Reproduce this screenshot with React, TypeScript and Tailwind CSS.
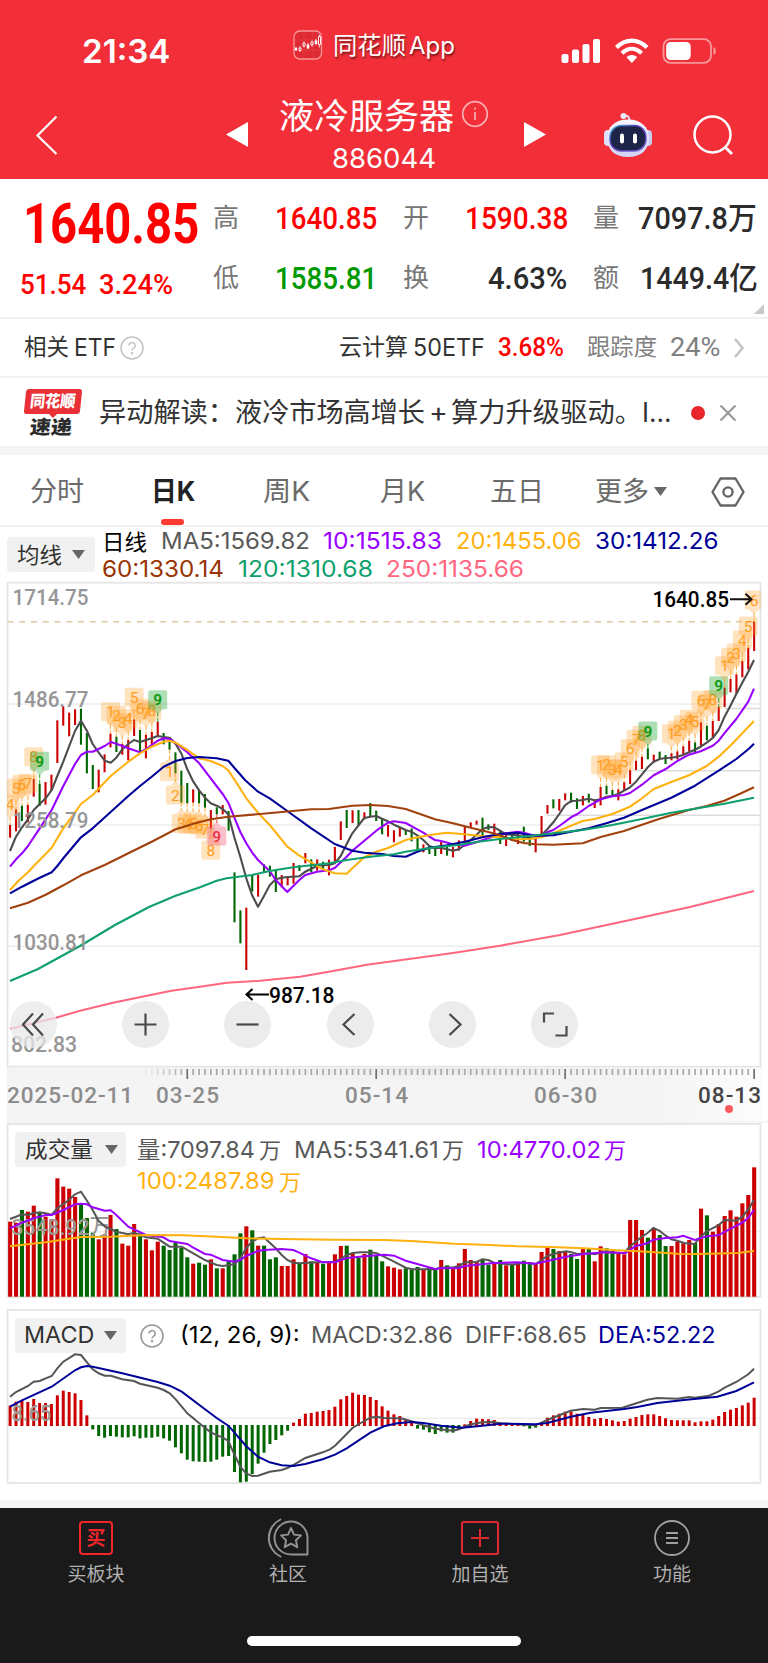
import React, { useLayoutEffect, useRef, useState } from "react";

/** Text that is stretched or squeezed horizontally to fill the width set by its class. */
function Fit({ className = "", children }: { className?: string; children: React.ReactNode }) {
  const outer = useRef<HTMLSpanElement>(null);
  const inner = useRef<HTMLSpanElement>(null);
  const [scale, setScale] = useState(1);
  useLayoutEffect(() => {
    const measure = () => {
      if (outer.current && inner.current && inner.current.offsetWidth > 0) {
        setScale(outer.current.clientWidth / inner.current.offsetWidth);
      }
    };
    measure();
    document.fonts?.ready.then(measure);
  }, []);
  return (
    <span ref={outer} className={`inline-block shrink-0 whitespace-nowrap leading-none ${className}`}>
      <span ref={inner} className="inline-block origin-left" style={{ transform: `scaleX(${scale})` }}>
        {children}
      </span>
    </span>
  );
}

const RED = "#cc0000";
const GREEN = "#006600";
const X0 = 10.1;
const STEP = 5.905;
const bx = (i: number) => X0 + STEP * i;

type Pt = [number, number];
/** Converts points kept in thirds of a pixel, relative to an origin, to page units. */
const seg = (ox: number, oy: number, s: string): Pt[] =>
  s.split(" ").map((p) => {
    const [x, y] = p.split(",").map(Number);
    return [ox + x / 3, oy + y / 3] as Pt;
  });
const poly = (...parts: Pt[][]) =>
  parts
    .flat()
    .map(([x, y]) => `${x.toFixed(1)},${y.toFixed(1)}`)
    .join(" ");

const bars = (s: string, oy: number) =>
  s.split(" ").map((t) => {
    const [a, b] = t.slice(1).split("-").map(Number);
    return { up: t[0] === "R", a: oy + a / 3, b: oy + (b || 0) / 3 };
  });

const candles = [
  ...bars(
    "R735-773 R688-754 G677-723 R675-727 R597-650 G611-678 R606-674 R584-633 R421-549 R379-437 R398-469 R388-435 G386-494 G459-580 G555-627 R569-637 R523-577 R461-502 G470-516 R492-524 R480-541 R418-468 G450-516 R464-535 R456-494 R425-468 G459-493 G484-509 G517-580 G572-668 G609-670 R628-668 G630-670 G642-683 R690-746 G682-703 R675-703 G693-752",
    580,
  ),
  ...bars(
    "G277-427 G391-490 R383-570 G285-335 R284-350 G253-277 G257-290 G273-336 R285-322 R293-316 R249-311 G255-273 R219-250 G238-277 R238-272 G245-270 R239-286 R201-245 R124-180 G90-144 R91-129 G90-137 R97-118 G69-110 G92-123 G115-163 R135-170 R151-187 R144-170 G150-165 G145-184 G173-214 R193-217 G198-222 G200-228 R183-222 G196-227 R201-232 R181-212 R140-188 R127-144 R122-134 G113-170 G133-150 R131-160 G150-192",
    780,
  ),
  ...bars(
    "R757-798 G760-782 R755-792 G740-785 G762-798 R765-817 R708-764 R675-701 G658-685 R657-692 R640-661 G638-668 G655-687 R648-676 G641-668 R660-684 R621-676 G617-643 G630-648 R628-661 R607-633 R570-612 R542-570 R530-567 G505-538 R524-546 G515-536 G525-552 R520-541 R514-538 R499-522 R482-514 G487-517 R427-497 G437-481 R423-475 R380-423 R323-381 R297-337 R283-340 R243-292 R203-268 R125-213",
    580,
  ),
];

const volumes = bars(
  "R305 R308 G270 R275 R257 G278 R290 R298 R175 R200 R206 R231 G250 G294 G338 R358 R343 R285 G327 R371 R377 R312 G340 R358 R391 R365 G377 G390 G368 G384 G412 R431 G428 G434 R418 G445 R445 G424 G403 G340 R319 G331 R377 G377 G418 G412 R438 R438 R418 G428 R402 G424 R426 G431 R424 R403 R378 G377 R400 G413 R402 G389 G407 G424 R439 R443 R448 G445 G448 G441 R450 G443 G447 R420 G436 R443 R430 R387 R420 R424 G418 G434 R430 G420 R436 G431 R432 G422 G426 R430 R396 R382 G387 R393 R394 G402 G417 R384 G384 R424 R379 G385 G392 R396 R403 R300 R300 R330 G353 R325 G345 G378 R378 R365 R370 R360 G369 R266 G286 R335 R312 R288 R271 R290 R250 R225 R142",
  1120,
);

const macd =
  "317 305 303 306 297 309 309 312 286 272 276 280 300 346 388 408 413 408 410 412 412 409 415 413 413 410 415 422 442 460 479 484 485 486 485 479 470 468 516 547 545 522 491 458 432 420 406 392 368 357 341 339 335 333 330 320 298 288 278 284 285 291 300 319 332 343 348 360 368 386 389 397 402 394 398 398 387 373 363 356 357 358 360 367 369 371 373 379 386 383 371 353 346 341 335 335 341 343 351 357 354 357 361 365 363 356 351 345 343 343 348 355 360 361 361 361 367 364 364 359 348 336 329 324 316 308 293"
    .split(" ")
    .map((n) => 1300 + Number(n) / 3);

const ma5 = poly(
  seg(0, 580, "30,813 48,770 66,742 84,718 101,690 119,672 137,655 155,630 172,588 190,545 207,500 225,453 243,422 261,453 278,492 296,518 314,542 332,548 349,533 367,508 385,492 402,480 420,486 438,480 455,475 473,468 491,471 509,473 527,492 545,523 562,568 580,605 598,632 615,653 632,670 650,677 668,687 685,703"),
  seg(200, 780, "103,172 121,230 139,295 156,345 174,380 192,348 209,316 227,298 245,293 262,291 280,290 298,289 316,275 334,266 351,258 369,256 387,255 404,250 422,228 440,192 457,160 475,137 493,114 511,110 529,108 546,116 564,124 582,134 599,142 617,150 634,155 652,166 670,180 688,198 705,205 723,203 741,208 759,212 776,208 794,195 812,180 829,165 847,148 865,141 883,142"),
  seg(500, 580, "0,752 18,763 53,766 71,772 89,775 107,775 124,766 142,748 160,727 178,702 195,676 213,663 231,662 248,660 266,656 284,661 302,658 319,650 337,648 355,642 372,632 390,622 408,605 426,583 443,562 461,545 479,537 496,534 514,533 532,530 549,525 567,517 585,509 602,500 620,488 638,474 656,450 673,412 691,378 709,342 727,308 745,275 762,240"),
);
const ma10 = poly(
  seg(0, 580, "30,860 48,838 66,820 84,798 119,745 155,690 190,618 225,552 243,525 261,515 278,515 314,498 332,486 349,491 385,505 420,517 438,508 473,482 491,475 509,477 527,489 562,517 598,550 632,595 668,642 685,668 703,712"),
  seg(200, 780, "121,156 139,190 156,217 174,240 209,273 227,300 262,336 280,318 298,300 316,285 351,275 387,271 404,264 422,247 440,230 457,212 493,182 529,152 564,128 582,124 617,129 652,148 670,158 688,170 705,180 723,183 759,193 794,197 829,187 865,175"),
  seg(500, 580, "0,763 53,755 71,758 107,768 124,767 142,757 160,750 178,738 213,712 231,703 266,678 302,658 337,649 372,645 390,639 426,614 461,586 496,568 532,543 567,524 602,514 638,497 656,482 673,460 709,417 745,365 762,326"),
);
const ma20 = poly(
  seg(0, 580, "30,930 58,900 84,877 101,858 119,840 155,803 190,745 243,672 278,645 332,588 385,545 420,520 455,500 491,485 509,482 527,488 562,510 598,535 632,543 668,558 685,571 703,598"),
  seg(200, 780, "139,55 174,98 209,135 262,200 298,227 334,247 369,268 404,280 440,281 457,265 493,232 529,215 564,204 582,196 617,180 652,172 705,163 741,158 794,163 847,168"),
  seg(500, 580, "0,772 36,778 89,777 124,772 160,760 213,737 248,723 284,717 337,702 390,680 426,655 461,627 514,606 567,586 620,558 656,530 691,497 727,460 762,423"),
);
const ma30 = poly(
  seg(0, 580, "30,940 66,920 119,893 155,877 172,858 190,835 243,772 278,745 332,696 385,648 420,618 455,590 491,560 527,543 562,534 598,531 650,535 685,542 703,563"),
  seg(200, 780, "135,0 174,35 209,55 262,93 334,145 404,192 457,212 493,218 546,222 582,228 617,230 652,215 688,203 741,196 794,185 847,172"),
  seg(500, 580, "0,762 53,758 89,766 124,767 160,766 213,755 266,745 319,730 372,713 426,690 514,653 585,617 656,572 709,537 745,508 762,491"),
);
const ma60 = poly(
  seg(0, 580, "30,985 84,968 137,944 190,916 243,886 314,855 385,820 455,785 527,748 580,731 632,718 685,710"),
  seg(200, 780, "180,102 245,96 334,88 387,87 457,77 511,75 564,78 617,87 705,118 759,130 812,143 865,156"),
  seg(500, 580, "0,766 36,780 71,789 107,793 160,794 248,790 302,771 372,753 426,734 479,716 567,690 620,678 673,662 727,638 762,622"),
);
const ma120 = poly(
  [[10, 981], [38, 969], [80, 946], [115, 925], [149, 907], [175, 896]],
  seg(200, 780, "0,322 50,302 80,295 156,285 209,273 280,262 387,250 440,240 511,230 582,223 617,215 705,202 776,195 829,186"),
  seg(500, 580, "0,777 89,768 160,760 248,750 337,735 426,717 514,698 602,683 673,671 762,653"),
);
const ma250 = poly(
  [[10, 1028.7], [56, 1017.7], [80, 1010.7], [113, 1002.7], [147, 995.7], [171.5, 990.7], [200, 986.7], [227, 982.7], [260, 980.7], [300, 976.7], [333, 971], [367, 964.7], [400, 960.3], [453, 953], [500, 945.7], [560, 935], [630, 920], [690, 907], [754, 891]],
);

const vol5 = poly(
  seg(0, 1120, "30,297 48,290 66,283 84,285 101,279 119,277 137,280 155,284 172,265 207,240 225,223 243,215 261,242 278,270 296,303 314,319 332,327 349,335 385,343 402,338 438,352 473,356 509,380 545,380 580,400 615,420 650,435 668,438 703,433 721,415 738,385 756,365 774,355 792,352 809,368 827,385 845,405 862,420 880,428 900,430 950,427 1005,425 1022,417 1040,405 1058,399 1080,397 1111,397 1130,400"),
  seg(384, 1120, "0,410 30,425 65,443 85,448 153,448 170,443 210,442 225,438 242,427 278,426 295,418 313,420 330,428 384,434 420,428 455,432 473,420 490,408 508,402 545,394 562,397 580,402 615,400 632,403 660,395 720,400 735,382 755,365 773,350 790,340 808,324 826,332 845,347 862,358 880,362 900,369 932,372 950,350 968,334 985,325 1003,316 1022,300 1057,302 1075,290 1093,268 1110,240"),
);
const vol10 = poly(
  seg(0, 1120, "30,325 66,308 101,295 137,285 155,285 190,270 225,253 243,251 261,253 278,262 314,272 332,271 349,285 385,320 402,328 438,345 490,352 509,363 562,372 580,383 615,402 632,404 668,420 703,425 721,420 738,408 774,393 792,390 845,387 880,390 898,398 933,415 968,427 1005,427 1040,414 1111,407"),
  seg(384, 1120, "0,404 30,407 65,422 100,432 153,447 170,445 225,444 242,438 278,434 330,429 400,427 455,431 490,423 545,410 600,402 660,397 725,399 755,378 790,370 808,359 845,354 880,352 898,347 932,360 968,349 1003,346 1040,326 1075,308 1093,293 1110,270"),
);
const vol100 = poly(
  seg(0, 1120, "30,379 137,367 243,351 332,350 438,345 550,346 650,350 738,355 850,357 1000,359"),
  seg(384, 1120, "0,360 80,363 210,371 300,374 400,379 500,381 600,385 700,391 790,395 880,401 940,402 1060,399 1110,393"),
);
const diff = poly(
  seg(0, 1300, "30,290 48,276 84,258 101,245 119,243 137,235 155,228 172,205 190,185 225,163 243,165 261,187 278,208 296,220 314,227 332,227 367,238 402,243 420,251 473,263 491,270 509,280 527,298 562,340 598,370 632,397 668,413 685,423 703,463 721,500 738,520 756,528 774,527 809,515 845,510 862,504 880,495 916,474 968,457 990,448 1005,437 1022,420 1058,383 1093,363 1111,353 1130,350"),
  seg(384, 1300, "0,354 50,355 83,364 118,376 153,386 207,392 225,388 242,380 260,373 295,367 330,366 348,370 455,376 490,360 560,332 597,327 632,329 650,324 715,323 750,312 790,299 820,294 880,296 915,291 932,293 975,287 1003,275 1022,263 1057,246 1093,223 1110,206"),
);
const dea = poly(
  seg(0, 1300, "30,320 66,301 155,260 225,211 243,202 261,198 278,200 367,220 473,246 509,257 545,275 615,328 650,354 685,377 703,397 738,438 774,470 809,487 845,496 880,498 916,492 968,478 1005,464 1040,445 1111,398"),
  seg(384, 1300, "0,379 40,370 83,366 118,369 172,377 235,383 295,377 350,371 455,373 490,369 560,350 620,338 720,327 760,321 820,309 900,300 1000,290 1057,273 1110,247"),
);

/** Sequence markers: bar index, digit, box centre in thirds of a pixel below 580, and side of the candle. */
const marks: [number, number, number, "t" | "b"][] = [
  [0, 4, 672, "t"], [1, 5, 624, "t"], [2, 6, 613, "t"], [3, 7, 610, "t"], [4, 8, 530, "t"], [5, 9, 544, "t"],
  [17, 1, 395, "t"], [18, 2, 406, "t"], [19, 3, 428, "t"], [20, 4, 416, "t"], [21, 5, 352, "t"], [22, 6, 384, "t"], [23, 7, 399, "t"], [24, 8, 391, "t"], [25, 9, 359, "t"],
  [27, 1, 575, "b"], [28, 2, 645, "b"], [29, 3, 730, "b"], [30, 4, 733, "b"], [31, 5, 731, "b"], [32, 6, 735, "b"], [33, 7, 748, "b"], [34, 8, 811, "b"], [35, 9, 768, "b"],
  [99, 0, 555, "t"], [100, 1, 555, "t"], [101, 2, 554, "t"], [102, 3, 568, "t"], [103, 4, 567, "t"], [104, 5, 545, "t"], [105, 6, 506, "t"], [106, 7, 478, "t"], [107, 8, 466, "t"], [108, 9, 453, "t"],
  [112, 1, 461, "t"], [113, 2, 450, "t"], [114, 3, 434, "t"], [115, 4, 418, "t"], [116, 5, 424, "t"], [117, 6, 361, "t"], [118, 7, 372, "t"], [119, 8, 359, "t"], [120, 9, 317, "t"],
  [121, 1, 257, "t"], [122, 2, 232, "t"], [123, 3, 219, "t"], [124, 4, 180, "t"], [125, 5, 138, "t"], [126, 6, 60, "t"],
];

const sans = "[font-family:Inter,'Noto_Sans_CJK_SC',sans-serif]";
const num = "[font-family:Roboto,'Noto_Sans_CJK_SC',sans-serif]";

function Mark({ m }: { m: [number, number, number, "t" | "b"] }) {
  const [i, d, z, side] = m;
  if (d === 0) return null;
  const x = bx(i);
  const y = 580 + z / 3;
  const nine = d === 9;
  const fill = nine ? (side === "t" ? "#1fa32e" : "#f0506a") : "#ffa028";
  const ink = nine ? (side === "t" ? "#0a9a14" : "#f03545") : "#ff9d1c";
  const c = candles[i];
  return (
    <g>
      <line x1={x} x2={x} y1={side === "t" ? y + 13 : c.b} y2={side === "t" ? c.a : y - 13} stroke={ink} strokeWidth="1.2" strokeDasharray="4 1.5" opacity=".75" />
      <rect x={x - 9.5} y={y - 9.5} width="19" height="19" rx="2" fill={fill} opacity={nine ? 0.36 : 0.3} />
      <path d={side === "t" ? `M${x - 5} ${y + 9.5}h10l-5 5z` : `M${x - 5} ${y - 9.5}h10l-5-5z`} fill={fill} opacity=".3" />
      <text x={x} y={y + 5.8} textAnchor="middle" fontSize="15.5" fontWeight={nine ? 600 : 400} fill={ink}>{d}</text>
    </g>
  );
}

function PriceChart() {
  const line = (points: string, stroke: string) => (
    <polyline points={points} fill="none" stroke={stroke} strokeWidth="2.1" strokeLinejoin="round" />
  );
  const axis = (label: string, y: number, w = 76, x = 12.5) => (
    <text x={x} y={y} textLength={w} lengthAdjust="spacingAndGlyphs" fontSize="22.5" fontWeight="500" fill="#969696">{label}</text>
  );
  return (
    <svg viewBox="0 581 768 487" className={`block h-[487px] w-[768px] ${num}`}>
      <defs>
        <clipPath id="plot"><rect x="7" y="582" width="754" height="485" /></clipPath>
      </defs>
      <path d="M8 704H760M8 825H760M8 946.3H760" stroke="#ededed" strokeWidth="1.5" />
      <path d="M724 708.5H760M634 770.7H760M547 815.2H760" stroke="#dcdcdc" strokeWidth="1.5" />
      <rect x="7.5" y="582.7" width="753" height="484" fill="none" stroke="#e6e6e6" strokeWidth="1.9" />
      <path d="M7.5 621.8H754" stroke="#dfc9a4" strokeWidth="1.6" strokeDasharray="6 5.75" />
      <g clipPath="url(#plot)">
        {candles.map((c, i) => (
          <line key={i} x1={bx(i)} x2={bx(i)} y1={c.a} y2={c.b} stroke={c.up ? RED : GREEN} strokeWidth="2.1" />
        ))}
        {marks.map((m) => <Mark key={m[0]} m={m} />)}
        {line(ma5, "#4d4d4d")}
        {line(ma10, "#9900ff")}
        {line(ma20, "#ffb10f")}
        {line(ma30, "#000099")}
        {line(ma60, "#a0410d")}
        {line(ma120, "#0f9f6e")}
        {line(ma250, "#ff6680")}
      </g>
      {axis("1714.75", 605)}
      {axis("1486.77", 707)}
      {axis("1258.79", 828)}
      {axis("1030.81", 950)}
      {axis("802.83", 1051.5, 66, 11)}
      <text x="652.5" y="607" textLength="76.5" lengthAdjust="spacingAndGlyphs" fontSize="22.5" fontWeight="500" fill="#000">1640.85</text>
      <path d="M730 599.3H751M745.5 593.8L751.5 599.3L745.5 604.8" stroke="#111" strokeWidth="2" fill="none" />
      <text x="269" y="1002.5" textLength="65.5" lengthAdjust="spacingAndGlyphs" fontSize="22.5" fontWeight="500" fill="#000">987.18</text>
      <path d="M269 994.5H247M252.5 989L246.5 994.5L252.5 1000" stroke="#000" strokeWidth="2" fill="none" />
    </svg>
  );
}

function Timeline() {
  const ticks = Array.from({ length: 104 }, (_, k) => k + 23);
  return (
    <svg viewBox="0 0 768 53" className={`block h-[53px] w-[768px] ${num}`}>
      <defs>
        <linearGradient id="tl" x1="0" y1="0" x2="1" y2="0">
          <stop offset="0" stopColor="#f4f4f4" /><stop offset=".85" stopColor="#f4f4f4" /><stop offset="1" stopColor="#fcfcfc" />
        </linearGradient>
        <radialGradient id="glow" cx=".5" cy="0" r=".5">
          <stop offset="0" stopColor="#e8e8e8" /><stop offset="1" stopColor="#f4f4f4" stopOpacity="0" />
        </radialGradient>
      </defs>
      <rect x="7" width="755" height="53" fill="url(#tl)" />
      <rect x="130" width="600" height="40" fill="url(#glow)" />
      {ticks.map((i) => {
        const major = (i - 30) % 32 === 0;
        return (
          <line key={i} x1={bx(i)} x2={bx(i)} y1="1" y2={major ? 11 : 7} stroke={major ? "#707070" : "#a8a8a8"} strokeWidth="1.7" opacity={Math.min(1, (i - 22) / 8)} />
        );
      })}
      <g fontSize="22.5" fontWeight="500" fill="#8c8c8c">
        <text x="7" y="34.8" textLength="126" lengthAdjust="spacing">2025-02-11</text>
        <text x="156" y="34.8" textLength="63" lengthAdjust="spacing">03-25</text>
        <text x="345" y="34.8" textLength="63" lengthAdjust="spacing">05-14</text>
        <text x="534" y="34.8" textLength="63" lengthAdjust="spacing">06-30</text>
        <text x="698" y="34.8" textLength="63" lengthAdjust="spacing" fill="#444">08-13</text>
      </g>
      <circle cx="729" cy="41" r="4" fill="#fa5a5f" />
    </svg>
  );
}

function VolumeChart() {
  return (
    <svg viewBox="0 1123 768 175" className={`block h-[175px] w-[768px] ${num}`}>
      <path d="M8 1231.7H760" stroke="#ededed" strokeWidth="1.5" />
      <rect x="7.5" y="1124" width="753" height="173" fill="none" stroke="#e6e6e6" strokeWidth="1.9" />
      {volumes.map((v, i) => (
        <rect key={i} x={bx(i) - 2} y={v.a} width="4.1" height={1296.7 - v.a} fill={v.up ? RED : GREEN} />
      ))}
      <text x="11.5" y="1235" textLength="99" lengthAdjust="spacingAndGlyphs" fontSize="22.5" fontWeight="500" fill="#999">3548.92万</text>
      <polyline points={vol5} fill="none" stroke="#555" strokeWidth="2" />
      <polyline points={vol10} fill="none" stroke="#9900ff" strokeWidth="2" />
      <polyline points={vol100} fill="none" stroke="#ffb10f" strokeWidth="2" />
    </svg>
  );
}

function MacdChart() {
  return (
    <svg viewBox="0 1309 768 175" className={`block h-[175px] w-[768px] ${num}`}>
      <path d="M8 1418.3H760" stroke="#ededed" strokeWidth="1.5" />
      <rect x="7.5" y="1310" width="753" height="173" fill="none" stroke="#e6e6e6" strokeWidth="1.9" />
      {macd.map((y, i) => {
        const up = y < 1425.5;
        return <rect key={i} x={bx(i) - 1.5} y={up ? y : 1425} width="3" height={up ? 1426 - y : y - 1425} fill={up ? RED : GREEN} />;
      })}
      <text x="11.5" y="1421" textLength="40" lengthAdjust="spacingAndGlyphs" fontSize="22.5" fontWeight="500" fill="#999">8.65</text>
      <polyline points={diff} fill="none" stroke="#555" strokeWidth="2" />
      <polyline points={dea} fill="none" stroke="#000099" strokeWidth="2" />
    </svg>
  );
}

function Caret({ className = "" }: { className?: string }) {
  return (
    <svg viewBox="0 0 13 9" className={`h-[9px] w-[13px] shrink-0 ${className}`}>
      <path d="M0 0H13L6.500 9z" fill="#666" />
    </svg>
  );
}

function Help({ className = "", stroke = "#999" }: { className?: string; stroke?: string }) {
  return (
    <svg viewBox="0 0 24 24" className={`size-6 shrink-0 ${className}`} fill="none" stroke={stroke} strokeWidth="1.600">
      <circle cx="12" cy="12" r="11" />
      <path d="M8.900 9.600a3.100 3.100 0 1 1 4.800 2.600c-1.100.7-1.700 1.200-1.700 2.400" />
      <circle cx="12" cy="17.300" r=".5" fill={stroke} />
    </svg>
  );
}

function Stat({ label, children }: { label: string; children: React.ReactNode }) {
  return (
    <div className="flex h-[26px] items-center">
      <span className="-ml-px mr-px w-[26px] shrink-0 text-[26px] leading-none text-[#777]">{label}</span>
      {children}
    </div>
  );
}

function RoundButton({ children, faint }: { children: React.ReactNode; faint?: boolean }) {
  return (
    <div className={`flex size-[47px] items-center justify-center rounded-full ${faint ? "mr-[10px] bg-[#e8e8e8]/75" : "bg-[#ececec]"}`}>
      <svg viewBox="0 0 47 47" className="size-[47px]" fill="none" stroke="#4a4a4a" strokeWidth="2.200">{children}</svg>
    </div>
  );
}

export default function App() {
  return (
    <div className={`flex h-[1663px] w-[768px] flex-col overflow-hidden bg-white ${sans}`}>
      {/* Header */}
      <header className="flex h-[179px] shrink-0 flex-col bg-[#f22f38] text-white">
        <div className="flex h-[90px] items-start">
          <Fit className="ml-[82px] mt-[36px] w-[88px] text-[32px] font-semibold">21:34</Fit>
          <svg viewBox="0 0 30 30" className="ml-[123px] mt-[29.500px] size-[30px] shrink-0" fill="none">
            <rect x="1" y="1" width="27.500" height="28" rx="6" fill="#e02a33" stroke="#f9979b" strokeWidth="1.300" />
            <path d="M11 2v26M20 2v26M2 10H28M2 20H28" stroke="#e8444b" strokeWidth=".6" />
            <path d="M7 16v6M11 11.500v6M15 13v6M19 10.500v6M23 9v6M26.400 4.500v13" stroke="#fff" strokeWidth=".8" />
            <path d="M1.600 17.500h2.600v3H1.600zM13.700 14.500h2.600v4h-2.600zM21.700 10.500h2.600v3.500h-2.600z" fill="#fff" />
            <path d="M6 18h2v2.500H6zM10 13h2v3h-2zM18 12h2v3h-2zM25.500 6.500h2v8h-2z" fill="#e02a33" stroke="#fff" strokeWidth=".9" />
          </svg>
          <Fit className="ml-[10px] mt-[34px] w-[73px] text-[24px] [text-shadow:1px_2px_2px_rgb(0_0_0/0.5)]">同花顺</Fit>
          <Fit className="ml-[3px] mt-[34px] w-[46px] text-[24px] [text-shadow:1px_2px_2px_rgb(0_0_0/0.5)]">App</Fit>
          <svg viewBox="0 0 160 28" className="ml-[105px] mt-[37px] h-7 w-[160px] shrink-0" fill="none">
            <g fill="#fff">
              <rect x="1.500" y="17" width="7" height="9" rx="2" />
              <rect x="12" y="12.500" width="7" height="13.500" rx="2" />
              <rect x="22.500" y="7" width="7" height="19" rx="2" />
              <rect x="33" y="2" width="7" height="24" rx="2" />
            </g>
            <g stroke="#fff" strokeWidth="4.200">
              <path d="M56.500 10.500C65.500 1.300 78 1.300 87 10.500" />
              <path d="M62 16.200C68 10.400 75.500 10.400 81.500 16.200" />
            </g>
            <path d="M66.500 20.300C69.700 17.300 74 17.300 77.200 20.300L71.800 26z" fill="#fff" />
            <rect x="103.500" y="2.200" width="47.500" height="23.600" rx="7" stroke="#f9989c" strokeWidth="1.800" />
            <rect x="106.200" y="5" width="24.500" height="18" rx="4.500" fill="#fff" />
            <path d="M153.500 10c3.200 1.200 3.200 6.800 0 8z" fill="#f9989c" />
          </svg>
        </div>
        <div className="flex h-[89px] items-start">
          <svg viewBox="0 0 24 40" className="ml-[35px] mt-[25px] h-10 w-6 shrink-0" fill="none" stroke="#fff" strokeWidth="2.200">
            <path d="M21.500 1.500L2.500 20.500L21.500 39" />
          </svg>
          <svg viewBox="0 0 22 25" className="ml-[167px] mt-[32px] h-[25px] w-[22px] shrink-0"><path d="M22 0V25L0 12.500z" fill="#fff" /></svg>
          <div className="ml-[31px] flex w-[215px] flex-col">
            <div className="flex items-center">
              <Fit className="mt-[8.500px] w-[175px] text-[35px]">液冷服务器</Fit>
              <svg viewBox="0 0 28 28" className="ml-[7px] mt-[4px] size-7 shrink-0" fill="none" stroke="#fbb0b3" strokeWidth="1.700">
                <circle cx="14" cy="14" r="12.300" /><path d="M14 12v8M14 7.600v2" />
              </svg>
            </div>
            <Fit className="ml-[53px] mt-[11px] w-[104px] text-[27.500px]">886044</Fit>
          </div>
          <svg viewBox="0 0 22 25" className="ml-[30px] mt-[32px] h-[25px] w-[22px] shrink-0"><path d="M0 0V25L22 12.500z" fill="#fff" /></svg>
          <svg viewBox="0 0 50 46" className="ml-[57px] mt-[21.500px] h-[46px] w-[50px] shrink-0" fill="none">
            <defs>
              <linearGradient id="bot" x1="0" y1="0" x2="0" y2="1"><stop offset="0" stopColor="#f6f8ff" /><stop offset="1" stopColor="#d3d1f5" /></linearGradient>
              <linearGradient id="visor" x1="0" y1="0" x2="1" y2="1"><stop offset="0" stopColor="#3fb6d8" /><stop offset=".4" stopColor="#5a3cb8" /><stop offset="1" stopColor="#7a6ad8" /></linearGradient>
            </defs>
            <path d="M20.500 4.500C24 3 26.500 4 26.500 9" stroke="#e6d5ea" strokeWidth="2" />
            <circle cx="20.500" cy="4" r="3" fill="#e9e9fb" />
            <rect x="1" y="18" width="8" height="16" rx="4" fill="#dcdff8" />
            <rect x="41" y="18" width="8" height="16" rx="4" fill="#c8cbf0" />
            <path d="M25 7.500C38 7.500 46 15 46 26S39 45 25 45 4 37 4 26 12 7.500 25 7.500z" fill="url(#bot)" />
            <rect x="7" y="13.500" width="36" height="25.500" rx="11.500" fill="#1c2547" stroke="url(#visor)" strokeWidth="1.500" />
            <rect x="17" y="21.500" width="4" height="10" rx="2" fill="#fff" />
            <rect x="30" y="21.500" width="4" height="10" rx="2" fill="#fff" />
          </svg>
          <svg viewBox="0 0 42 42" className="ml-[39px] mt-[24px] size-[42px] shrink-0" fill="none" stroke="#fff" strokeWidth="2.500">
            <circle cx="20.500" cy="20.500" r="18" /><path d="M33 33L40 40" strokeWidth="2.800" />
          </svg>
        </div>
      </header>

      {/* Quote */}
      <section className={`flex h-[138px] shrink-0 ${num}`}>
        <div className="w-[214px] shrink-0 text-[#ff0000]">
          <Fit className="ml-[23px] mt-[18px] w-[176px] text-[55px] font-bold">1640.85</Fit>
          <div className="mt-[19px] flex">
            <Fit className="ml-[20px] w-[66px] text-[28px] font-medium">51.54</Fit>
            <Fit className="ml-[13px] w-[74px] text-[28px] font-medium">3.24%</Fit>
          </div>
        </div>
        <div className="flex w-[190px] shrink-0 flex-col gap-[34px] pt-[26px]">
          <Stat label="高"><Fit className="ml-[35px] w-[102px] text-[31px] font-medium text-[#ff0000]">1640.85</Fit></Stat>
          <Stat label="低"><Fit className="ml-[35px] w-[102px] text-[31px] font-medium text-[#009a00]">1585.81</Fit></Stat>
        </div>
        <div className="flex w-[190px] shrink-0 flex-col gap-[34px] pt-[26px]">
          <Stat label="开"><Fit className="ml-[35px] w-[103px] text-[31px] font-medium text-[#ff0000]">1590.38</Fit></Stat>
          <Stat label="换"><Fit className="ml-[58px] w-[79px] text-[31px] font-medium text-[#2b2b2b]">4.63%</Fit></Stat>
        </div>
        <div className="flex shrink-0 flex-col gap-[34px] pt-[26px]">
          <Stat label="量"><Fit className="ml-[18px] w-[119px] text-[31px] font-medium text-[#2b2b2b]">7097.8万</Fit></Stat>
          <Stat label="额"><Fit className="ml-[20px] w-[118px] text-[31px] font-medium text-[#2b2b2b]">1449.4亿</Fit></Stat>
          <svg viewBox="0 0 10 10" className="-mt-[21px] ml-[160px] size-[10px]"><path d="M10 0V10H0z" fill="#c8c8c8" /></svg>
        </div>
      </section>

      {/* Related ETF */}
      <section className="flex h-[61px] shrink-0 items-center border-y-2 border-[#f2f2f2] text-[23px] text-[#333]">
        <Fit className="ml-[24px] w-[45px]">相关</Fit>
        <Fit className="ml-[5px] w-[42px] text-[24px]">ETF</Fit>
        <Help className="ml-[4px]" stroke="#c4c4c4" />
        <Fit className="ml-[195px] w-[69px]">云计算</Fit>
        <Fit className="ml-[5px] w-[72px] text-[24px]">50ETF</Fit>
        <Fit className={`ml-[13px] w-[66px] text-[25px] font-medium text-[#ff0000] ${num}`}>3.68%</Fit>
        <Fit className="ml-[23px] w-[70px] text-[#808080]">跟踪度</Fit>
        <Fit className={`ml-[13px] w-[50px] text-[25px] text-[#808080] ${num}`}>24%</Fit>
        <svg viewBox="0 0 10 20" className="ml-[14px] h-5 w-[10px]" fill="none" stroke="#c4c4c4" strokeWidth="2.500"><path d="M1 1L8.500 10L1 19" /></svg>
      </section>

      {/* News strip */}
      <section className="flex h-[68px] shrink-0 items-center pt-px">
        <div className="ml-[23px] flex w-[60px] flex-col items-center">
          <div className="flex h-[25px] w-[56px] -skew-x-6 items-center justify-center rounded-[3px] bg-[#e83036]">
            <Fit className="w-[46px] text-[16.500px] font-black text-white">同花顺</Fit>
          </div>
          <svg viewBox="0 0 8 4" className="h-1 w-2"><path d="M0 0H8L4 4z" fill="#e83036" /></svg>
          <Fit className="-ml-1 w-[42px] -skew-x-6 text-[19px] font-black text-[#2b2b2b]">速递</Fit>
        </div>
        <Fit className="ml-[16px] w-[136px] text-[27px] text-[#333]">异动解读：</Fit>
        <Fit className="w-[190px] text-[27px] text-[#333]">液冷市场高增长</Fit>
        <Fit className="ml-[4px] w-[19px] text-[27px] text-[#333]">+</Fit>
        <Fit className="ml-[3px] w-[191px] text-[27px] text-[#333]">算力升级驱动。</Fit>
        <Fit className="w-[30px] text-[27px] text-[#333]">I...</Fit>
        <div className="ml-[19px] size-[14px] rounded-full bg-[#e8262c]" />
        <svg viewBox="0 0 16 16" className="ml-[15px] size-4" stroke="#999" strokeWidth="2.200"><path d="M.5.5L15.500 15.500M15.500.5L.5 15.500" /></svg>
      </section>
      <div className="h-[9px] shrink-0 bg-[#f4f4f4]" />

      {/* Period tabs */}
      <nav className="flex h-[72px] shrink-0 items-center border-b-2 border-[#f2f2f2] pt-[3px] text-[27px] text-[#6b6b6b]">
        <Fit className="ml-[30px] w-[54px]">分时</Fit>
        <div className="ml-[67px] flex h-[67px] w-[44px] flex-col items-center text-[#222]">
          <div className="flex h-[62px] items-center pt-[5px]"><Fit className="w-[44px] font-bold">日K</Fit></div>
          <div className="-ml-[1px] h-[6px] w-[23px] shrink-0 rounded-[3px] bg-[#fb3a30]" />
        </div>
        <Fit className="ml-[68px] w-[47px]">周K</Fit>
        <Fit className="ml-[70px] w-[45px]">月K</Fit>
        <Fit className="ml-[65px] w-[54px]">五日</Fit>
        <Fit className="ml-[51px] w-[54px]">更多</Fit>
        <Caret className="ml-[5px]" />
        <svg viewBox="0 0 34 30" className="ml-[44px] h-[30px] w-[34px]" fill="none" stroke="#666" strokeWidth="2.400">
          <path d="M9.500 1.500H24.500L32.500 15L24.500 28.500H9.500L1.500 15z" strokeLinejoin="round" /><circle cx="17" cy="15" r="4.600" />
        </svg>
      </nav>

      {/* Moving averages legend */}
      <section className="flex h-[54px] shrink-0">
        <div className="ml-[7px] mt-[10px] flex h-[35px] w-[88px] shrink-0 items-center rounded bg-[#f1f1f1]">
          <Fit className="ml-[10px] w-[45px] text-[22px] text-[#333]">均线</Fit>
          <Caret className="ml-[10px]" />
        </div>
        <div className="ml-[7px] flex flex-col text-[23px]">
          <div className="mt-[3px] flex h-[23px] items-center">
            <Fit className="w-[45px] text-[22px] text-black">日线</Fit>
            <Fit className="ml-[14px] w-[149px] text-[#595959]">MA5:1569.82</Fit>
            <Fit className="ml-[13px] w-[119px] text-[#9900ff]">10:1515.83</Fit>
            <Fit className="ml-[14px] w-[126px] text-[#ffb10f]">20:1455.06</Fit>
            <Fit className="ml-[13px] w-[123px] text-[#000099]">30:1412.26</Fit>
          </div>
          <div className="mt-[5px] flex h-[23px] items-center">
            <Fit className="w-[122px] text-[#993300]">60:1330.14</Fit>
            <Fit className="ml-[14px] w-[135px] text-[#0f9f6e]">120:1310.68</Fit>
            <Fit className="ml-[13px] w-[138px] text-[#ff6680]">250:1135.66</Fit>
          </div>
        </div>
      </section>

      {/* Price chart */}
      <section className="relative h-[487px] shrink-0">
        <PriceChart />
        <div className="absolute left-[9.500px] top-[420px] flex gap-[55.400px]">
          <RoundButton faint><path d="M23 12.500L13 23.500L23 34.500M33 12.500L23 23.500L33 34.500" /></RoundButton>
          <RoundButton><path d="M23.500 12.500V34.500M12.500 23.500H34.500" /></RoundButton>
          <RoundButton><path d="M12.500 23.500H34.500" /></RoundButton>
          <RoundButton><path d="M27.500 13L16.500 23.500L27.500 34" /></RoundButton>
          <RoundButton><path d="M20.500 13L31.500 23.500L20.500 34" /></RoundButton>
          <RoundButton><path d="M13 21.500V12.500H23M35.500 25V34.500H24.500" /></RoundButton>
        </div>
      </section>
      <Timeline />
      <div className="ml-[7px] h-[2px] shrink-0 bg-[#f4f4f4]" />

      {/* Volume */}
      <section className="relative h-[175px] shrink-0">
        <VolumeChart />
        <div className="absolute left-0 top-[8.500px] flex text-[23px]">
          <div className="ml-[15px] flex h-[35px] w-[111px] items-center rounded bg-[#f1f1f1]">
            <Fit className="ml-[10px] w-[68px] text-[22px] text-[#333]">成交量</Fit>
            <Caret className="ml-[12px]" />
          </div>
          <div className="ml-[11px]">
            <div className="flex h-[37px] items-center">
              <Fit className="w-[118px] text-[#595959]">量:7097.84</Fit>
              <Fit className="ml-[4px] w-[22px] text-[22px] text-[#595959]">万</Fit>
              <Fit className="ml-[13px] w-[145px] text-[#595959]">MA5:5341.61</Fit>
              <Fit className="ml-[3px] w-[22px] text-[22px] text-[#595959]">万</Fit>
              <Fit className="ml-[13px] w-[124px] text-[#9900ff]">10:4770.02</Fit>
              <Fit className="ml-[3px] w-[22px] text-[22px] text-[#9900ff]">万</Fit>
            </div>
            <div className="flex h-[26px] items-center text-[#ffb10f]">
              <Fit className="w-[138px]">100:2487.89</Fit>
              <Fit className="ml-[4px] w-[22px] text-[22px]">万</Fit>
            </div>
          </div>
        </div>
      </section>

      {/* MACD */}
      <section className="relative mt-[11px] h-[175px] shrink-0">
        <MacdChart />
        <div className="absolute left-0 top-[8.500px] flex h-[36px] items-center text-[23px]">
          <div className="ml-[15px] flex h-[35px] w-[111px] items-center rounded bg-[#f1f1f1] text-[#333]">
            <Fit className="ml-[9px] w-[70px]">MACD</Fit>
            <Caret className="ml-[10px]" />
          </div>
          <Help className="ml-[14px]" />
          <Fit className="ml-[16px] w-[120px] text-black">(12, 26, 9):</Fit>
          <Fit className="ml-[11px] w-[142px] text-[#595959]">MACD:32.86</Fit>
          <Fit className="ml-[12px] w-[122px] text-[#595959]">DIFF:68.65</Fit>
          <Fit className="ml-[11px] w-[118px] text-[#000099]">DEA:52.22</Fit>
        </div>
      </section>
      <div className="mt-[16px] h-[8px] shrink-0 bg-[#f4f4f4]" />

      {/* Bottom bar */}
      <footer className="flex flex-1 flex-col items-center bg-[#1a1a1a] text-[19px] text-[#b0b0b0]">
        <div className="grid w-full grid-cols-4 pt-[10px]">
          <div className="flex flex-col items-center">
            <div className="flex h-[40px] items-center">
              <div className="flex h-[34px] w-[34px] items-center justify-center rounded-[4px] border-2 border-[#f0262d] text-[19px] font-bold leading-none text-[#f0262d]">买</div>
            </div>
            <Fit className="mt-[7px] w-[57px]">买板块</Fit>
          </div>
          <div className="flex flex-col items-center">
            <svg viewBox="0 0 42 40" className="h-[40px] w-[42px]" fill="none" stroke="#939393" strokeWidth="1.900">
              <path d="M24 3.500A16.500 16.500 0 0 0 24 36.500H40.500V20A16.500 16.500 0 0 0 24 3.500z" strokeLinejoin="round" />
              <path d="M13.500 1.500A20.500 20.500 0 0 0 13.500 38.500" strokeLinecap="round" />
              <path d="M24 10L27 16.600L34 17.400L28.900 22.200L30.300 29.200L24 25.700L17.700 29.200L19.100 22.200L14 17.400L21 16.600z" strokeLinejoin="round" />
            </svg>
            <Fit className="mt-[7px] w-[38px]">社区</Fit>
          </div>
          <div className="flex flex-col items-center">
            <svg viewBox="0 0 38 40" className="h-[40px] w-[38px]" fill="none" stroke="#e02830" strokeWidth="2">
              <rect x="1" y="4" width="36" height="32" rx="1.500" /><path d="M19 11V29M10 20H28" />
            </svg>
            <Fit className="mt-[7px] w-[57px]">加自选</Fit>
          </div>
          <div className="flex flex-col items-center">
            <svg viewBox="0 0 38 40" className="h-[40px] w-[38px]" fill="none" stroke="#a0a0a0" strokeWidth="1.800">
              <circle cx="19" cy="20" r="17" /><path d="M13 15H25M13 20H25M13 25H25" />
            </svg>
            <Fit className="mt-[7px] w-[38px]">功能</Fit>
          </div>
        </div>
        <div className="mt-[52px] h-[10px] w-[274px] rounded-full bg-white" />
      </footer>
    </div>
  );
}
